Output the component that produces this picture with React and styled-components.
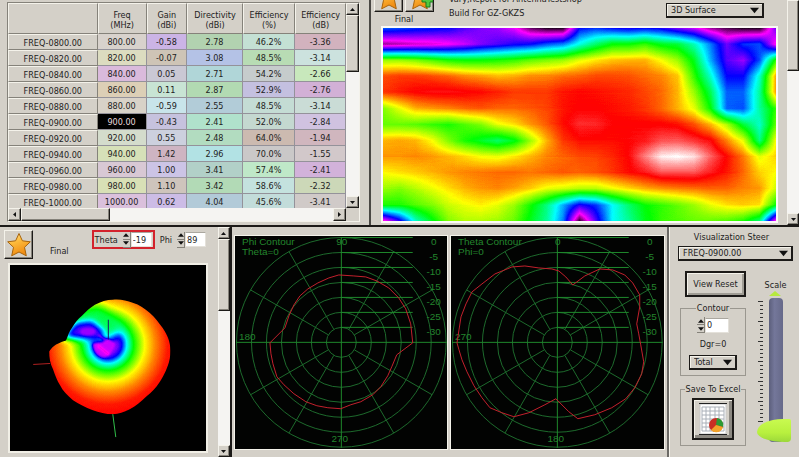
import React, { useState } from "react";
import styled, { createGlobalStyle } from "styled-components";

const colors = {
  face: "#d4d0c8",
  light: "#f4f2ea",
  shadow: "#85827a",
  dark: "#1c1a18",
  track: "#f5f4f2",
  grid: "#1d6a2c",
  axis: "#1f8a2c",
  label: "#23852d",
  trace: "#c3202c",
};

const GlobalStyle = createGlobalStyle`
  * {
    box-sizing: border-box;
  }

  body {
    margin: 0;
    background: ${colors.face};
    color: #222;
    font-family: "DejaVu Sans Condensed", "Noto Sans", sans-serif;
    font-size: 9px;
    line-height: 10px;
    overflow: hidden;
  }

  button, input, select {
    font: inherit;
    color: inherit;
    margin: 0;
    padding: 0;
    border-radius: 0;
  }
`;

const Page = styled.div`
  display: grid;
  grid-template-rows: auto 1fr;
  min-height: 100vh;
`;

const TopRow = styled.div`
  display: grid;
  grid-template-columns: 371fr 428fr;
  border-bottom: 2px solid ${colors.dark};
`;

const BottomRow = styled.div`
  display: grid;
  grid-template-columns: 232fr 438fr 129fr;
`;

/* ---------- shared parts ---------- */

const Raised = styled.button`
  display: flex;
  align-items: center;
  justify-content: center;
  background: ${colors.face};
  border: 1px solid;
  border-color: ${colors.light} ${colors.dark} ${colors.dark} ${colors.light};
  box-shadow: inset -1px -1px 0 ${colors.shadow};
`;

const BarColumn = styled.div`
  display: flex;
  flex-direction: ${(p) => (p.$horizontal ? "row" : "column")};
  background: ${colors.track};
  min-width: 0;
`;

const BarEnd = styled(Raised)`
  flex: none;
  width: ${(p) => (p.$horizontal ? "13px" : "100%")};
  height: ${(p) => (p.$horizontal ? "100%" : "12px")};
`;

const BarThumb = styled(Raised).attrs({ as: "div" })`
  flex: none;
  width: ${(p) => (p.$horizontal ? p.$size + "px" : "100%")};
  height: ${(p) => (p.$horizontal ? "100%" : p.$size + "px")};
`;

const BarSpace = styled.div`
  flex: 1;
`;

const Arrow = ({ dir, size = 5 }) => {
  const points = {
    up: "0,8 5,2 10,8",
    down: "0,2 5,8 10,2",
    left: "8,0 2,5 8,10",
    right: "2,0 8,5 2,10",
  };
  return (
    <svg width={size} height={size} viewBox="0 0 10 10">
      <polygon points={points[dir]} fill="#111" />
    </svg>
  );
};

function ScrollBar({ horizontal, thumb, noStart }) {
  return (
    <BarColumn $horizontal={horizontal}>
      {!noStart && (
        <BarEnd $horizontal={horizontal} aria-label="Scroll back">
          <Arrow dir={horizontal ? "left" : "up"} />
        </BarEnd>
      )}
      <BarThumb $horizontal={horizontal} $size={thumb} />
      <BarSpace />
      <BarEnd $horizontal={horizontal} aria-label="Scroll forward">
        <Arrow dir={horizontal ? "right" : "down"} />
      </BarEnd>
    </BarColumn>
  );
}

const SelectBox = styled.span`
  position: relative;
  display: block;
  width: ${(p) => p.$width};

  & select {
    display: block;
    appearance: none;
    width: 100%;
    height: 15px;
    padding: 0 14px 0 4px;
    background: ${colors.face};
    border: 1px solid ${colors.dark};
    border-right-width: 2px;
    border-bottom-width: 2px;
    box-shadow: inset 1px 1px 0 ${colors.light};
    line-height: 11px;
  }

  & svg {
    position: absolute;
    right: 5px;
    top: 3px;
    pointer-events: none;
  }
`;

function Select({ width, label, options }) {
  return (
    <SelectBox $width={width}>
      <select aria-label={label} defaultValue={options[0]}>
        {options.map((o) => (
          <option key={o}>{o}</option>
        ))}
      </select>
      <Arrow dir="down" size={9} />
    </SelectBox>
  );
}

const Spin = styled.span`
  display: flex;
  align-items: center;

  & input {
    width: ${(p) => p.$width}px;
    height: 15px;
    padding: 0 1px;
    border: 1px solid #e4e1da;
    border-top-color: #aaa79f;
    background: #fff;
  }
`;

const SpinButtons = styled.span`
  display: flex;
  flex-direction: column;

  & button {
    display: flex;
    align-items: center;
    justify-content: center;
    width: 8px;
    height: 8px;
    background: ${colors.face};
    border: 0;
    border-right: 1px solid ${colors.shadow};
    border-bottom: 1px solid ${colors.shadow};
  }
`;

function Spinner({ id, start, width }) {
  const [value, setValue] = useState(start);
  return (
    <Spin $width={width}>
      <SpinButtons>
        <button aria-label="Increase" onClick={() => setValue(Number(value) + 1)}>
          <Arrow dir="up" size={6} />
        </button>
        <button aria-label="Decrease" onClick={() => setValue(Number(value) - 1)}>
          <Arrow dir="down" size={6} />
        </button>
      </SpinButtons>
      <input id={id} value={value} onChange={(e) => setValue(e.target.value)} />
    </Spin>
  );
}

const IconButton = styled(Raised)`
  width: 29px;
  height: 29px;
`;

const Star = ({ plus }) => (
  <svg width="26" height="26" viewBox="0 0 26 26">
    <defs>
      <linearGradient id="starFill" x1="0" y1="0" x2="0.4" y2="1">
        <stop offset="0" stopColor="#ffe9a0" />
        <stop offset="0.45" stopColor="#fdbb3c" />
        <stop offset="1" stopColor="#f08c12" />
      </linearGradient>
    </defs>
    <path
      d="M13 1.5 L16.4 8.8 L24.3 9.8 L18.5 15.3 L20.3 23.8 L13 20 L5.7 23.8 L7.5 15.3 L1.7 9.8 L9.6 8.8 Z"
      fill="url(#starFill)"
      stroke="#a8640c"
      strokeWidth="1"
      strokeLinejoin="round"
    />
    {plus && (
      <path
        d="M15 13h4v-4h4v4h3v4h-3v5h-4v-5h-4z"
        fill="#4fc83c"
        stroke="#1b7a1c"
        strokeWidth="1"
      />
    )}
  </svg>
);

/* ---------- frequency table ---------- */

const headers = [
  ["Freq", "(MHz)"],
  ["Gain", "(dBi)"],
  ["Directivity", "(dBi)"],
  ["Efficiency", "(%)"],
  ["Efficiency", "(dB)"],
];

const rows = [
  ["FREQ-0800.00", ["800.00", "#d8d2cc"], ["-0.58", "#cbb4e6"], ["2.78", "#b2d2b0"], ["46.2%", "#c4e0d4"], ["-3.36", "#d2b2be"]],
  ["FREQ-0820.00", ["820.00", "#dcdcc0"], ["-0.07", "#cec4b6"], ["3.08", "#b4c2e6"], ["48.5%", "#b8dcb4"], ["-3.14", "#cce2de"]],
  ["FREQ-0840.00", ["840.00", "#dabadc"], ["0.05", "#cac8d4"], ["2.71", "#b0d6d8"], ["54.2%", "#c6cccc"], ["-2.66", "#c8e8bc"]],
  ["FREQ-0860.00", ["860.00", "#dccfb6"], ["0.11", "#c8e4d4"], ["2.87", "#b2dab2"], ["52.9%", "#c4c0e0"], ["-2.76", "#d2b0d6"]],
  ["FREQ-0880.00", ["880.00", "#d8d2c8"], ["-0.59", "#c8e4ea"], ["2.55", "#b2ccd8"], ["48.5%", "#c4dcd4"], ["-3.14", "#cadcd6"]],
  ["FREQ-0900.00", ["900.00", "#000"], ["-0.43", "#c6c2de"], ["2.41", "#b0e2cc"], ["52.0%", "#c4d8d0"], ["-2.84", "#d0c2e0"]],
  ["FREQ-0920.00", ["920.00", "#d4dccc"], ["0.55", "#ccd0de"], ["2.48", "#b2dcc0"], ["64.0%", "#ccbab0"], ["-1.94", "#d0b6be"]],
  ["FREQ-0940.00", ["940.00", "#d6e0b8"], ["1.42", "#ceb4c2"], ["2.96", "#b2e2e4"], ["70.0%", "#cac8c8"], ["-1.55", "#d2c8ca"]],
  ["FREQ-0960.00", ["960.00", "#d8c8d4"], ["1.00", "#ccc4e6"], ["3.41", "#b2d0c8"], ["57.4%", "#bfe8c8"], ["-2.41", "#d2b2da"]],
  ["FREQ-0980.00", ["980.00", "#d8e0b6"], ["1.10", "#cec4bc"], ["3.42", "#b2dab6"], ["58.6%", "#c4e2de"], ["-2.32", "#ccd8b8"]],
  ["FREQ-1000.00", ["1000.00", "#dac0dc"], ["0.62", "#ccbce6"], ["4.04", "#b2cad8"], ["45.6%", "#c2dcda"], ["-3.41", "#d0cac8"]],
];

const TablePanel = styled.section`
  padding: 2px 9px 3px 7px;
  border-right: 2px solid #4a4844;
`;

const TableFrame = styled.div`
  display: grid;
  grid-template-columns: 1fr 13px;
  grid-template-rows: 205px 13px;
  border: 1px solid ${colors.light};
  border-top-color: ${colors.shadow};
  border-left-color: ${colors.shadow};
`;

const TableView = styled.div`
  overflow: hidden;
`;

const Table = styled.table`
  width: 100%;
  table-layout: fixed;
  border-collapse: separate;
  border-spacing: 0;
  text-align: center;
`;

const HeadCell = styled.th`
  width: ${(p) => p.$width};
  height: 31px;
  padding: 3px 0 0;
  font-weight: normal;
  background: ${colors.face};
  border: 1px solid;
  border-color: ${colors.light} ${colors.shadow} ${colors.shadow} ${colors.light};
`;

const RowHead = styled.th`
  height: 16px;
  padding: 2px 0 0;
  font-weight: normal;
  background: ${colors.face};
  border: 1px solid;
  border-color: ${colors.light} ${colors.shadow} ${colors.shadow} ${colors.light};
`;

const Cell = styled.td`
  height: 16px;
  padding: 1px 0 0;
  background: ${(p) => p.$tint};
  color: ${(p) => (p.$tint === "#000" ? "#e6d8dc" : "inherit")};
  border-right: 1px solid #94929a;
  border-bottom: 1px solid #94929a;
`;

function FrequencyTable() {
  const widths = ["14.5%", "12%", "16.5%", "15.5%", "15%"];
  return (
    <TablePanel>
      <TableFrame>
        <TableView>
          <Table>
            <thead>
              <tr>
                <HeadCell $width="26.5%" />
                {headers.map(([name, unit], i) => (
                  <HeadCell key={i} scope="col" $width={widths[i]}>
                    {name}
                    <br />
                    {unit}
                  </HeadCell>
                ))}
              </tr>
            </thead>
            <tbody>
              {rows.map(([name, ...cells]) => (
                <tr key={name}>
                  <RowHead scope="row">{name}</RowHead>
                  {cells.map(([text, tint], i) => (
                    <Cell key={i} $tint={tint}>
                      {text}
                    </Cell>
                  ))}
                </tr>
              ))}
            </tbody>
          </Table>
        </TableView>
        <ScrollBar thumb={57} />
        <ScrollBar horizontal thumb={89} />
      </TableFrame>
    </TablePanel>
  );
}

/* ---------- surface map ---------- */

// gain level on a 15 degree grid, 0 = black ... 7 = white
const surface = [
  [2.4, 2.3, 2.2, 2.1, 2.0, 1.7, 1.5, 1.4, 1.1, 0.4, 0.1, 0.1, 2.0, 2.2, 2.0, 1.9, 2.0, 1.9, 1.5, 1.2, 0.6, 0.3, 0.1, 0.1, 1.6],
  [0.6, 0.7, 0.8, 0.85, 1.0, 1.2, 1.5, 1.7, 1.9, 2.0, 2.3, 2.5, 3.1, 3.6, 4.0, 4.0, 4.2, 3.9, 3.8, 3.3, 2.5, 1.6, 2.2, 2.3, 0.9],
  [4.6, 4.6, 4.5, 4.3, 4.1, 4.0, 4.0, 4.1, 4.2, 4.4, 4.5, 4.6, 4.9, 5.1, 5.25, 5.3, 5.3, 5.0, 4.6, 3.9, 2.7, 1.7, 1.4, 2.3, 4.2],
  [5.7, 5.8, 5.8, 5.75, 5.65, 5.5, 5.4, 5.3, 5.35, 5.45, 5.5, 5.6, 5.65, 5.75, 5.75, 5.7, 5.6, 5.5, 5.25, 4.2, 3.2, 2.0, 2.0, 3.2, 5.4],
  [5.8, 5.9, 6.0, 6.08, 6.08, 6.03, 5.98, 5.9, 5.8, 5.8, 5.8, 5.92, 5.98, 5.95, 5.9, 5.85, 5.75, 5.6, 5.3, 4.6, 3.7, 2.4, 2.4, 3.4, 5.4],
  [4.5, 4.9, 5.3, 5.4, 5.5, 5.6, 5.65, 5.6, 5.6, 5.65, 5.75, 5.92, 6.0, 6.0, 5.95, 5.9, 5.8, 5.6, 5.3, 4.9, 4.0, 2.4, 2.3, 3.4, 4.2],
  [4.4, 4.4, 4.35, 4.2, 4.1, 4.3, 4.5, 4.9, 5.1, 5.4, 5.65, 5.95, 6.18, 6.15, 6.02, 6.0, 6.0, 6.0, 5.95, 5.7, 5.3, 4.7, 3.8, 3.2, 4.4],
  [5.3, 5.35, 5.3, 5.0, 4.5, 4.1, 3.85, 3.6, 3.9, 4.6, 5.3, 5.8, 5.97, 5.95, 5.95, 6.0, 6.1, 6.3, 6.35, 6.2, 6.03, 5.5, 4.9, 3.5, 5.0],
  [5.4, 5.4, 5.45, 5.4, 5.3, 5.15, 5.0, 4.95, 5.1, 5.3, 5.5, 5.6, 5.7, 5.75, 5.85, 6.0, 6.5, 6.95, 7.0, 6.9, 6.4, 5.98, 5.55, 4.9, 5.2],
  [5.0, 5.1, 5.2, 5.3, 5.4, 5.5, 5.55, 5.6, 5.6, 5.55, 5.6, 5.65, 5.6, 5.65, 5.8, 5.95, 6.08, 6.3, 6.3, 6.3, 6.1, 5.9, 5.6, 5.2, 5.0],
  [4.6, 4.5, 4.7, 4.9, 5.1, 5.3, 5.4, 5.45, 5.35, 5.2, 4.9, 4.8, 4.7, 4.7, 4.9, 5.1, 5.3, 5.4, 5.5, 5.55, 5.6, 5.6, 5.5, 5.4, 4.8],
  [4.1, 4.1, 4.3, 4.5, 4.8, 4.95, 5.05, 4.9, 4.6, 4.1, 3.5, 2.7, 1.9, 2.2, 3.0, 3.6, 4.0, 4.2, 4.4, 4.6, 4.9, 5.1, 5.2, 5.1, 4.0],
  [0.8, 1.8, 3.2, 3.9, 4.5, 4.7, 4.7, 4.6, 4.4, 3.9, 3.4, 2.5, 0.2, 1.7, 3.0, 3.4, 3.9, 4.2, 4.3, 4.4, 4.4, 4.3, 4.1, 3.5, 0.8],
];

const gray = (level) => {
  const g = Math.round((level / 7) * 255);
  return `rgb(${g},${g},${g})`;
};

// maps gray levels to the black-magenta-blue-cyan-green-yellow-red-white scale
const SpectrumFilter = ({ id }) => (
  <filter id={id} x="0" y="0" width="1" height="1" colorInterpolationFilters="sRGB">
    <feComponentTransfer>
      <feFuncR type="table" tableValues="0 1 0 0 0 1 1 1" />
      <feFuncG type="table" tableValues="0 0 0 1 1 1 0 1" />
      <feFuncB type="table" tableValues="0 1 1 1 0 0 0 1" />
    </feComponentTransfer>
  </filter>
);

const SurfacePanel = styled.section`
  display: grid;
  grid-template-columns: 1fr 12px;
  height: 225px;
  overflow: hidden;
`;

const SurfaceBody = styled.div`
  display: flex;
  flex-direction: column;
  padding: 0 9px 2px 10px;
  min-width: 0;
`;

const SurfaceHead = styled.div`
  display: flex;
  align-items: flex-end;
  height: 26px;
`;

const StarGroup = styled.div`
  display: flex;
  flex-direction: column;
  align-items: center;
  margin-left: -7px;
  width: 60px;
`;

const StarRow = styled.div`
  display: flex;
  gap: 2px;
`;

const Caption = styled.div`
  line-height: 14px;
`;

const BuildText = styled.p`
  margin: 0 0 6px 15px;
  line-height: 14px;
`;

const ModeSlot = styled.div`
  margin: 0 14px 8px auto;
`;

const Map = styled.svg`
  display: block;
  width: 100%;
  height: 197px;
  border: 2px solid #fbfaf6;
`;

function SurfaceMap() {
  const height = (surface.length - 1) * 16;
  const width = (surface[0].length - 1) * 16;
  return (
    <Map viewBox={`0 0 ${width} ${height}`} preserveAspectRatio="none" role="img" aria-label="Gain surface">
      <defs>
        <SpectrumFilter id="spectrumMap" />
        {surface.map((line, j) => (
          <React.Fragment key={j}>
            <linearGradient id={`line${j}`} gradientUnits="userSpaceOnUse" x1="0" x2={width} y1="0" y2="0">
              {line.map((level, i) => (
                <stop key={i} offset={i / (line.length - 1)} stopColor={gray(level)} />
              ))}
            </linearGradient>
            <linearGradient id={`fade${j}`} gradientUnits="userSpaceOnUse" x1="0" x2="0" y1={(j - 1) * 16} y2={j * 16}>
              <stop offset="0" stopColor="#fff" stopOpacity="0" />
              <stop offset="1" stopColor="#fff" />
            </linearGradient>
            <mask id={`mask${j}`} maskUnits="userSpaceOnUse" x="0" y="0" width={width} height={height}>
              <rect width={width} height={height} fill={`url(#fade${j})`} />
            </mask>
          </React.Fragment>
        ))}
      </defs>
      <g filter="url(#spectrumMap)">
        {surface.map((line, j) => (
          <rect
            key={j}
            width={width}
            height={height}
            fill={`url(#line${j})`}
            mask={j ? `url(#mask${j})` : undefined}
          />
        ))}
      </g>
    </Map>
  );
}

function Surface() {
  return (
    <SurfacePanel>
      <SurfaceBody>
        <SurfaceHead>
          <StarGroup>
            <StarRow>
              <IconButton aria-label="Favorite">
                <Star />
              </IconButton>
              <IconButton aria-label="Add favorite">
                <Star plus />
              </IconButton>
            </StarRow>
            <Caption>Final</Caption>
          </StarGroup>
          <BuildText>
            Vary,Report for AntennaTestshop
            <br />
            Build For GZ-GKZS
          </BuildText>
          <ModeSlot>
            <Select width="98px" label="Plot type" options={["3D Surface"]} />
          </ModeSlot>
        </SurfaceHead>
        <SurfaceMap />
      </SurfaceBody>
      <ScrollBar noStart thumb={71} />
    </SurfacePanel>
  );
}

/* ---------- 3D pattern ---------- */

const PatternPanel = styled.section`
  display: grid;
  grid-template-columns: 1fr 12px;
  border-right: 2px solid ${colors.dark};
`;

const PatternBody = styled.div`
  display: flex;
  flex-direction: column;
  padding: 3px 10px 4px 8px;
  min-width: 0;
`;

const PatternHead = styled.div`
  display: flex;
  align-items: flex-start;
  height: 33px;
  margin: 0 -8px 0 -4px;

  & ${Caption} {
    margin: 14px 23px 0 17px;
  }
`;

const AngleField = styled.div`
  display: flex;
  align-items: center;
  gap: 5px;
  height: 19px;
  padding: 0 1px;
  margin-right: 2px;
  border: 2px solid ${(p) => (p.$marked ? "#d3222c" : "transparent")};
`;

const PatternView = styled.svg`
  display: block;
  flex: 1 1 0;
  width: 100%;
  height: 0;
  min-height: 190px;
  background: #000;
  border: 2px solid #f1efe6;
`;

const shape =
  "M103 35 C110 34 117 36 123 38 C130 40 135 44 140 48 C146 53 149 58 153 63 C158 70 161 78 161 86 C161 92 160 97 158 102 C156 108 153 113 150 118 C146 124 142 128 137 132 C131 138 126 142 120 145 C114 148 109 150 103 150 C96 150 89 148 83 146 C75 143 69 140 63 136 C57 131 53 127 50 121 C47 116 45 111 43 105 C40 99 39 93 39 87 C41 84 43 82 46 80 C50 78 53 77 56 76 C58 71 59 67 62 63 C65 58 68 54 72 51 C76 47 80 43 85 40 C91 37 97 35 103 35 Z";

const rings = [
  [0, 1.3],
  [10, 1.6],
  [14, 2],
  [19, 3],
  [26, 4],
  [37, 5],
  [48, 5.5],
  [60, 5.9],
  [72, 6],
];

function Pattern() {
  return (
    <PatternPanel>
      <PatternBody>
        <PatternHead>
          <IconButton aria-label="Favorite">
            <Star />
          </IconButton>
          <Caption>Final</Caption>
          <AngleField $marked>
            <label htmlFor="theta">Theta</label>
            <Spinner id="theta" start="-19" width={21} />
          </AngleField>
          <AngleField>
            <label htmlFor="phi">Phi</label>
            <Spinner id="phi" start="89" width={21} />
          </AngleField>
        </PatternHead>
        <PatternView viewBox="0 0 196 187" role="img" aria-label="3D pattern">
          <defs>
            <SpectrumFilter id="spectrumBall" />
            <filter id="soft" x="-1" y="-1" width="3" height="3" colorInterpolationFilters="sRGB">
              <feGaussianBlur stdDeviation="5" />
            </filter>
            <filter id="softer" x="-1" y="-1" width="3" height="3" colorInterpolationFilters="sRGB">
              <feGaussianBlur stdDeviation="3" />
            </filter>
            <filter id="detail" x="-1" y="-1" width="3" height="3" colorInterpolationFilters="sRGB">
              <feGaussianBlur stdDeviation="1" />
            </filter>
            <radialGradient id="ball" gradientUnits="userSpaceOnUse" cx="98" cy="80" r="72">
              {rings.map(([r, level]) => (
                <stop key={r} offset={r / 72} stopColor={gray(level)} />
              ))}
            </radialGradient>
            <clipPath id="ballShape">
              <path d={shape} />
            </clipPath>
          </defs>
          <g clipPath="url(#ballShape)">
            <g filter="url(#spectrumBall)">
              <rect width="196" height="187" fill="url(#ball)" />
              <path d="M56 70 L68 44 L90 40 L114 62 L98 76 L74 73 Z" fill={gray(3.7)} filter="url(#soft)" />
              <path d="M52 73 L66 58 L82 56 L96 68 L88 76 L66 74 Z" fill={gray(1.7)} filter="url(#softer)" />
              <ellipse cx="78" cy="67" rx="8" ry="4" fill={gray(1.4)} filter="url(#detail)" />
              <path d="M83 79 Q84 92 95 93 Q103 90 106 79 L98 74 L92 78 Z" fill={gray(1.2)} filter="url(#detail)" />
              <path d="M88 81 L99 90" stroke={gray(0.8)} strokeWidth="2" filter="url(#detail)" />
              <path d="M88 70 L97 76" stroke={gray(1.3)} strokeWidth="2" filter="url(#detail)" />
            </g>
          </g>
          <path d="M98.5 55V75" stroke="#141468" strokeWidth="1" />
          <path d="M23 100L40 99" stroke="#b02020" strokeWidth="1" />
          <path d="M103 150L106 173" stroke="#30c04a" strokeWidth="1" />
        </PatternView>
      </PatternBody>
      <ScrollBar thumb={72} />
    </PatternPanel>
  );
}

/* ---------- polar contours ---------- */

const PolarPanel = styled.section`
  display: grid;
  grid-template-columns: 1fr 1fr;
  align-items: start;
  gap: 2px;
  padding: 8px 2px 0 2px;
  border-right: 2px solid #6c6a66;
`;

const PolarFrame = styled.svg`
  display: block;
  width: 100%;
  background: #020302;
  border: 1px solid ${colors.light};

  & text {
    font-family: "Liberation Sans", sans-serif;
    font-size: 10px;
    fill: ${colors.label};
  }
`;

const radii = [15, 30, 45, 60, 75, 90, 105];
const spokes = [30, 60, 120, 150, 210, 240, 300, 330];

const phiTrace =
  "35,107 50,92 54,80 59,69 65,60 73,53 83,47 94,42 104,39 119,40 131,41 142,45 154,52 164,62 171,73 176,88 178,107 162,119 157,131 153,140 146,151 138,159 126,166 116,169 106,173 93,172 82,170 71,166 59,158 49,149 42,141 38,128 36,118";
const thetaTrace =
  "6,107 8,94 10,81 15,68 21,56 31,48 44,38 61,31 74,30 88,32 101,33 108,35 115,41 122,49 134,40 149,33 162,34 174,39 182,47 189,59 189,71 186,88 188,98 190,109 193,126 191,138 184,152 175,163 161,172 144,179 127,183 118,176 105,163 94,169 78,177 63,181 51,177 39,172 31,162 23,150 16,136 11,124 8,114";

function Polar({ title, note, top, left, bottom, trace }) {
  return (
    <PolarFrame viewBox="0 0 213 213" role="img" aria-label={title}>
      <g fill="none" stroke={colors.grid} strokeWidth="1">
        {radii.map((r) => (
          <circle key={r} cx="106.5" cy="106.5" r={r} />
        ))}
        {spokes.map((a) => {
          const c = Math.cos((a * Math.PI) / 180);
          const s = Math.sin((a * Math.PI) / 180);
          return (
            <line key={a} x1={106.5 + 15 * c} y1={106.5 + 15 * s} x2={106.5 + 105 * c} y2={106.5 + 105 * s} />
          );
        })}
      </g>
      <g stroke={colors.axis} strokeWidth="1">
        <path d="M1 106.5H212M106.5 1V212" />
        {radii.map((r) => (
          <path key={r} d={`M106 ${106.5 - r}H178`} />
        ))}
      </g>
      <text x="7" y="9">{title}</text>
      <text x="7" y="19">{note}</text>
      <text x="107" y="9" textAnchor="middle">{top}</text>
      <text x="4" y="104">{left}</text>
      <text x="105" y="206" textAnchor="middle">{bottom}</text>
      {[0, -5, -10, -15, -20, -25, -30].map((n, i) => (
        <text key={n} x="199" y={9 + i * 15} textAnchor="middle">
          {n}
        </text>
      ))}
      <polygon points={trace} fill="none" stroke={colors.trace} strokeWidth="1" />
    </PolarFrame>
  );
}

/* ---------- steering panel ---------- */

const SteerPanel = styled.section`
  display: flex;
  flex-direction: column;
  padding: 5px 6px 0 8px;
  border-left: 1px solid ${colors.light};
`;

const SteerTitle = styled.div`
  padding-right: 8px;
  margin-bottom: 4px;
  text-align: center;
`;

const SteerColumns = styled.div`
  display: grid;
  grid-template-columns: 68px 1fr;
  margin-top: 10px;
`;

const SteerControls = styled.div`
  display: flex;
  flex-direction: column;
  padding-left: 2px;
`;

const ResetButton = styled(Raised)`
  height: 26px;
  margin: 0 0 6px 5px;
  border: 2px solid ${colors.dark};
  box-shadow: inset 1px 1px 0 ${colors.light}, inset -2px -2px 0 #a09d95;
  white-space: nowrap;
`;

const Group = styled.fieldset`
  display: flex;
  flex-direction: column;
  align-items: center;
  gap: 6px;
  min-width: 0;
  margin: 0 0 8px;
  padding: 4px 0 5px;
  border: 1px solid #9a978f;

  & legend {
    margin: 0 auto;
    padding: 0 1px;
    white-space: nowrap;
  }
`;

const ExcelButton = styled(Raised)`
  width: 42px;
  height: 42px;
  border: 2px solid ${colors.dark};
  box-shadow: inset 1px 1px 0 ${colors.light}, inset -3px -3px 0 #8c8982;
`;

const ScaleColumn = styled.div`
  display: flex;
  flex-direction: column;
  align-items: center;
  gap: 2px;
  padding-top: 9px;
`;

const ScaleHead = styled.div`
  display: flex;
  flex-direction: column;
  align-items: center;
  gap: 1px;
  padding-left: 12px;
`;

const ScaleRow = styled.div`
  display: flex;
  align-items: flex-start;
  width: 100%;
  padding-left: 12px;
  gap: 3px;
`;

const ScaleInput = styled.input`
  appearance: none;
  writing-mode: vertical-lr;
  direction: rtl;
  width: 34px;
  height: 144px;
  margin-left: -7px;
  background: transparent;

  &::-webkit-slider-runnable-track {
    width: 14px;
    height: 144px;
    border-radius: 4px;
    background: linear-gradient(90deg, #5c5f7c, #74779a 40%, #666989);
  }

  &::-webkit-slider-thumb {
    appearance: none;
    width: 34px;
    height: 23px;
    margin-left: -12px;
    border: 0;
    border-radius: 28px 2px 4px 30px / 14px 2px 4px 11px;
    background: linear-gradient(#c9fa50, #b8f03e 60%, #9cd83a);
  }
`;

const ExcelIcon = () => (
  <svg width="28" height="32" viewBox="0 0 28 32">
    <rect x="1" y="1" width="26" height="30" fill="#fff" stroke="#c8c8c8" />
    <path d="M0 0.500H28M0 31.500H28" stroke="#222" />
    <path
      d="M3 4H25M3 8H25M3 12H25M3 16H25M3 20H25M3 24H25M3 28H25M3 4V28M7 4V28M11 4V28M16 4V28M20 4V28M25 4V28"
      stroke="#aab0b8"
      strokeWidth="1"
    />
    <circle cx="17" cy="22" r="7" fill="#c92f24" />
    <path d="M17 22L18 15A7 7 0 0 1 24 24Z" fill="#2d9a34" />
    <path d="M17 22L24 24A7 7 0 0 1 12 27Z" fill="#f2a32a" />
  </svg>
);

const Ticks = () => (
  <svg width="5" height="124" viewBox="0 0 5 124">
    {Array.from({ length: 31 }, (_, i) => (
      <path key={i} d={`M${i % 5 ? 2 : 0} ${i * 4 + 3.5}H5`} stroke="#333" strokeWidth="1" />
    ))}
  </svg>
);

const TopMark = () => (
  <svg width="12" height="5" viewBox="0 0 12 5">
    <path d="M0 5L6 0L12 5Z" fill="#b6e93e" />
  </svg>
);

function Steering() {
  return (
    <SteerPanel>
      <SteerTitle>Visualization Steer</SteerTitle>
      <Select width="100%" label="Visualization Steer" options={["FREQ-0900.00"]} />
      <SteerColumns>
        <SteerControls>
          <ResetButton>View Reset</ResetButton>
          <Group>
            <legend>Contour</legend>
            <Spinner id="contour" start="0" width={24} />
            <label htmlFor="contour">Dgr=0</label>
            <Select width="48px" label="Contour" options={["Total"]} />
          </Group>
          <Group>
            <legend>Save To Excel</legend>
            <ExcelButton aria-label="Save To Excel">
              <ExcelIcon />
            </ExcelButton>
          </Group>
        </SteerControls>
        <ScaleColumn>
          <ScaleHead>
            <label htmlFor="scale">Scale</label>
            <TopMark />
          </ScaleHead>
          <ScaleRow>
            <Ticks />
            <ScaleInput id="scale" type="range" min="0" max="100" defaultValue="0" />
          </ScaleRow>
        </ScaleColumn>
      </SteerColumns>
    </SteerPanel>
  );
}

function App() {
  return (
    <>
      <GlobalStyle />
      <Page>
        <TopRow>
          <FrequencyTable />
          <Surface />
        </TopRow>
        <BottomRow>
          <Pattern />
          <PolarPanel>
            <Polar title="Phi Contour" note="Theta=0" top="90" left="180" bottom="270" trace={phiTrace} />
            <Polar title="Theta Contour" note="Phi=0" top="0" left="270" bottom="180" trace={thetaTrace} />
          </PolarPanel>
          <Steering />
        </BottomRow>
      </Page>
    </>
  );
}

export default App;
